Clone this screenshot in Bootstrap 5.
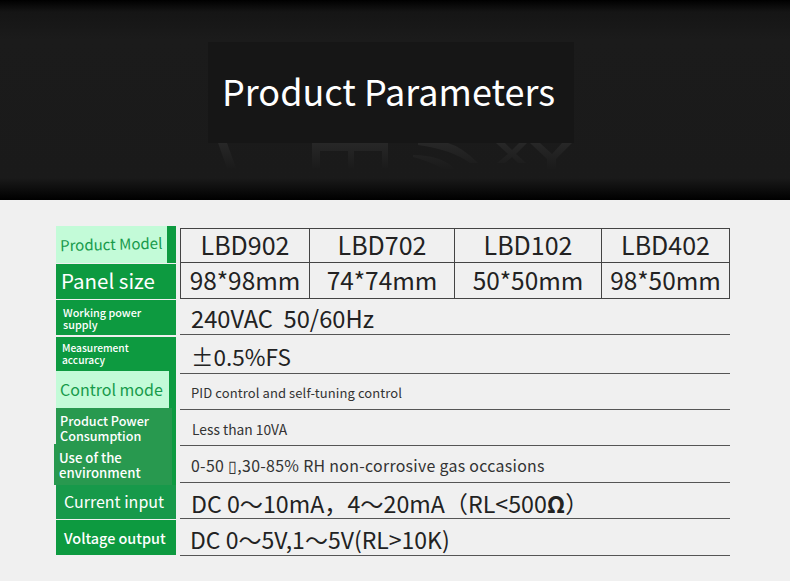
<!doctype html>
<html lang="en">
<head>
<meta charset="utf-8">
<link rel="stylesheet" href="https://cdn.jsdelivr.net/npm/bootstrap@5.3.0/dist/css/bootstrap.min.css">
<style>
html,body{background:#f0f0f0;margin:0;height:581px;overflow:hidden}
body{font-family:"Noto Sans CJK SC","Noto Sans",sans-serif;color:#222}
.hero{height:200px;background:linear-gradient(#000 0,#151515 12px,#1b1b1b 40px,#1a1a1a 178px,#000 200px);position:relative;overflow:hidden}
.hero-box{width:366px;height:101px;margin:42px 0 0 208px;padding:0 0 6px 14px;background:#161616;color:#fff;font-size:36px;line-height:1;position:relative;z-index:1}
.hero-ghost{position:absolute;left:208px;top:143px}
.spec{padding:26px 60px 0 54px}
.labels{width:122px}
.lab{color:#fff;display:flex;align-items:center;flex:none;margin-left:2px;width:120px;background:#0d9a40}
.lab-light{color:#179a4b}
.lab-light span{background:#c3fbd8;align-self:stretch;display:flex;align-items:center}
.tilt{display:inline-block;transform:rotate(-1.3deg)}
.r1{height:37px}.r2{height:35px;margin-top:1px}.r3{height:35px;margin-top:1px}.r4{height:34px;margin-top:2px}.r5{height:37px}.r6{height:36px}.r7{height:41px}.r8{height:34px}.r9{height:35px;margin-top:1px}
.soft{background:#28994f;border-right:4px solid #0d9a40}
.shift{margin-left:0;width:122px}
.mid{background:#17994a}
.cap-big{font-size:20.5px;padding:0 0 2px 5px}
.cap-md{font-size:16px;padding:0 0 2px 8px}
.cap-sm{font-size:10.8px;line-height:12px;padding-left:7px;font-weight:500}
.cap-xs{font-size:10.2px;line-height:12px;padding-left:6px;font-weight:500}
.cap-13{font-size:12.6px;line-height:14.5px;padding:5px 0 0 4px;font-weight:500}
.cap-env{font-size:13.2px;line-height:15px;padding:0 0 0 5px;font-weight:500}
.cap-volt{font-size:14.4px;padding-left:8px;font-weight:500}
.light-md{width:113px;padding:0 0 2px 4px;font-size:16px}
.light-sm{width:111px;padding-left:4px;font-size:15px}
.values{width:550px;margin-left:4px;padding-top:2px}
.ptable{width:549px;border-collapse:collapse;font-size:25px;line-height:1;table-layout:fixed;text-align:center}
.ptable td{border:1px solid #444;padding:0 0 2px;height:34px;white-space:nowrap}
.ptable tr+tr td{height:36px;font-size:24.4px;padding:0}
.line{border-bottom:1px solid #555;display:flex;align-items:center;padding-left:11px;white-space:nowrap}
.v1{height:36px;font-size:23.7px;padding-top:4px}.v2{height:39px;font-size:22.5px;padding-top:6px}.v3{height:36px;font-size:13px;color:#333;letter-spacing:.1px;padding-top:2px}.v4{height:36px;font-size:13.8px;color:#333;padding:3px 0 0 12px}.v5{height:37px;font-size:15.9px;color:#333;letter-spacing:.3px;padding-top:3px}.v6{height:36px;font-size:23.2px;padding-top:6px}.v7{height:37px;font-size:23px;padding:4px 0 0 10px}
.omega{font-weight:700}
</style>
</head>
<body>
<header class="hero">
  <svg class="hero-ghost" width="369" height="30" viewBox="0 0 369 30" fill="none">
    <defs><linearGradient id="fade" gradientUnits="userSpaceOnUse" x1="0" y1="0" x2="0" y2="25"><stop offset="0" stop-color="#272727"/><stop offset="1" stop-color="#1b1b1b"/></linearGradient></defs>
    <g fill="url(#fade)">
      <path d="M10 0h9l9 25h-9z"/>
      <path d="M104 0h76v25h-6V8h-28v17h-6V8h-28v17h-8z"/>
      <path d="M210 0h30q14 4 30 20h-8q-20-14-52-18zM205 12q28 0 42 14h-12q-14-8-30-12z"/>
      <path d="M288 0h9l7 7 7-7h8l-11 11 10 9h-8l-6-6-7 6h-8l11-9zM322 0h10l12 11 10-11h10l-16 16v10h-9V16z"/>
    </g>
  </svg>
  <div class="hero-box d-flex align-items-center">Product Parameters</div>
</header>
<main class="spec d-flex">
  <div class="labels d-flex flex-column">
    <div class="lab lab-light r1"><span class="light-sm"><b class="tilt fw-normal">Product Model</b></span></div>
    <div class="lab r2 cap-big">Panel size</div>
    <div class="lab r3 cap-sm">Working power<br>supply</div>
    <div class="lab r4 cap-xs">Measurement<br>accuracy</div>
    <div class="lab lab-light r5"><span class="light-md">Control mode</span></div>
    <div class="lab soft r6 cap-13">Product Power<br>Consumption</div>
    <div class="lab soft r7 cap-env shift">Use of the<br>environment</div>
    <div class="lab mid r8 cap-md">Current input</div>
    <div class="lab r9 cap-volt">Voltage output</div>
  </div>
  <div class="values">
    <table class="ptable">
      <colgroup><col style="width:129px"><col style="width:145px"><col style="width:147px"><col style="width:128px"></colgroup>
      <tr><td>LBD902</td><td>LBD702</td><td>LBD102</td><td>LBD402</td></tr>
      <tr><td>98*98mm</td><td>74*74mm</td><td>50*50mm</td><td>98*50mm</td></tr>
    </table>
    <div class="line v1">240VAC&nbsp;&nbsp;50/60Hz</div>
    <div class="line v2">±0.5%FS</div>
    <div class="line v3">PID control and self-tuning control</div>
    <div class="line v4">Less than 10VA</div>
    <div class="line v5">0-50 ▯,30-85% RH non-corrosive gas occasions</div>
    <div class="line v6">DC 0～10mA，4～20mA（RL&lt;500<span class="omega">Ω</span>）</div>
    <div class="line v7">DC 0～5V,1～5V(RL&gt;10K)</div>
  </div>
</main>
<script src="https://cdn.jsdelivr.net/npm/bootstrap@5.3.0/dist/js/bootstrap.bundle.min.js"></script>
</body>
</html>
